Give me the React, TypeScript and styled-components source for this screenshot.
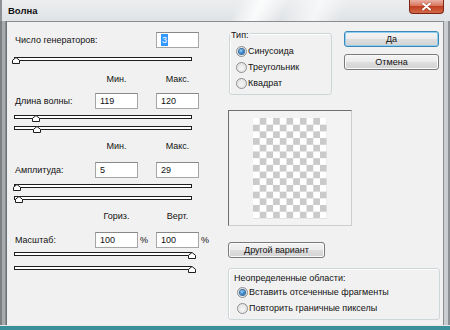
import React from 'react';
import styled, { createGlobalStyle } from 'styled-components';

const GlobalStyle = createGlobalStyle`
  html, body {
    margin: 0;
    padding: 0;
    background: #f1f1f1;
  }
  * { box-sizing: border-box; }
`;

const Window = styled.div`
  width: 450px;
  height: 330px;
  display: flex;
  flex-direction: column;
  overflow: hidden;
  font-family: "Liberation Sans", Arial, sans-serif;
  font-size: 9px;
  color: #111;
`;

const TitleBar = styled.div`
  height: 21px;
  flex: none;
  display: flex;
  justify-content: space-between;
  align-items: flex-start;
  padding: 0 6px 0 8px;
  background:
    linear-gradient(118deg, transparent 52%, rgba(255, 255, 255, 0.85) 57%, transparent 63%, rgba(255, 255, 255, 0.65) 70%, transparent 76%),
    linear-gradient(180deg, #eceef0 0%, #e0e3e6 100%);
  box-shadow: inset 2px 0 #8e9296;
`;

const Title = styled.span`
  margin-top: 5px;
  font-size: 9.5px;
  font-weight: bold;
  color: #111;
`;

const CloseButton = styled.div`
  width: 35px;
  height: 14px;
  display: flex;
  align-items: center;
  justify-content: center;
  border: 1px solid #7d2414;
  border-top: none;
  border-radius: 0 0 4px 4px;
  background: linear-gradient(180deg, #eab0a2 0%, #d8745c 45%, #c2401f 50%, #d2684a 100%);
`;

const Middle = styled.div`
  flex: 1;
  display: flex;
  min-height: 0;
`;

const LeftEdge = styled.div`
  width: 6px;
  flex: none;
  background: linear-gradient(90deg, #7c7f82 0 2px, #a8abae 2px 5px, #8a8d90 5px 6px);
`;

const RightEdge = styled.div`
  width: 6px;
  flex: none;
  background: linear-gradient(90deg, #c9cdd1 0 4px, #8d9195 4px 6px);
`;

const BottomEdge = styled.div`
  height: 5px;
  flex: none;
  background: linear-gradient(180deg, #e6e6e6 0 1px, #3a8f9b 1px 5px);
`;

const Client = styled.div`
  flex: 1;
  display: flex;
  align-items: flex-start;
  padding: 9px 0 0 7px;
  background: #f1f1f1;
  border-top: 1px solid #8a8d90;
  border-left: 1px solid #6c6f72;
  border-right: 1px solid #8a8d90;
`;

/* left pane */

const LeftPane = styled.div`
  width: 200px;
  display: flex;
  flex-direction: column;
`;

const Row = styled.div<{ $top: number; $height?: number }>`
  display: grid;
  grid-template-columns: 81px 43px 18px 43px 12px;
  align-items: center;
  height: ${p => p.$height ?? 16}px;
  margin-top: ${p => p.$top}px;
`;

const Label = styled.span<{ $span?: number }>`
  grid-column: span ${p => p.$span ?? 1};
  padding-left: 1px;
  white-space: nowrap;
`;

const ColHead = styled.span`
  text-align: center;
  white-space: nowrap;
`;

const TextBox = styled.div`
  height: 16px;
  border: 1px solid #a6a6a6;
  border-top-color: #888;
  background: #fff;
  padding-left: 4px;
  line-height: 14px;
  white-space: nowrap;
`;

const Selected = styled.span`
  background: #3399ff;
  color: #fff;
  padding: 1px 1px;
`;

const Percent = styled.span`
  padding-left: 2px;
`;

const SliderBox = styled.div<{ $top: number }>`
  position: relative;
  width: 178px;
  height: 7px;
  margin-top: ${p => p.$top}px;
`;

const Track = styled.div`
  height: 4px;
  border: 1px solid #1e1e1e;
  background: #fff;
`;

const Thumb = styled.svg`
  position: absolute;
  top: 0;
`;

const Slider: React.FC<{ top: number; pos: number }> = ({ top, pos }) => (
  <SliderBox $top={top}>
    <Track />
    <Thumb width="8" height="7" viewBox="0 0 8 7" style={{ left: pos }}>
      <polygon points="4,0.5 7.5,3.3 7.5,6.5 0.5,6.5 0.5,3.3" fill="#fff" stroke="#1e1e1e" strokeWidth="1" />
    </Thumb>
  </SliderBox>
);

/* right pane */

const RightPane = styled.div`
  width: 212px;
  margin-left: 14px;
  display: flex;
  flex-direction: column;
`;

const TopRow = styled.div`
  display: flex;
  align-items: flex-start;
`;

const GroupBox = styled.div<{ $top: number; $width: number; $inset: number; $pad: number }>`
  width: ${p => p.$width}px;
  margin-top: ${p => p.$top}px;
  margin-left: ${p => p.$inset}px;
  display: flex;
  flex-direction: column;
  padding: 0 0 3px ${p => p.$pad}px;
  border: 1px solid #cfd6da;
  border-radius: 3px;
  box-shadow: inset 1px 1px 0 #fff;
`;

const GroupTitle = styled.span<{ $top: number; $left: number; $masked?: boolean }>`
  align-self: flex-start;
  margin: ${p => p.$top}px 0 0 ${p => p.$left}px;
  padding: 0 1px;
  height: 11px;
  line-height: 11px;
  background: ${p => (p.$masked ? '#f1f1f1' : 'transparent')};
  white-space: nowrap;
`;

const RadioRow = styled.div<{ $first?: boolean }>`
  display: flex;
  align-items: center;
  gap: 1px;
  height: 16px;
  margin-top: ${p => (p.$first ? 2 : 0)}px;
  white-space: nowrap;
`;

const RadioDot = styled.span<{ $checked?: boolean }>`
  width: 11px;
  height: 11px;
  flex: none;
  border-radius: 50%;
  border: 1px solid #8c8e91;
  background: radial-gradient(circle at 50% 60%, #f6f6f6 0%, #dcdcdc 100%);
  display: flex;
  align-items: center;
  justify-content: center;

  &::after {
    content: '';
    display: ${p => (p.$checked ? 'block' : 'none')};
    width: 5px;
    height: 5px;
    border-radius: 50%;
    background: radial-gradient(circle at 40% 35%, #9fd6fb 0%, #2a7cc9 55%, #0d4c8c 100%);
    box-shadow: 0 0 0 1px #3b6f9a;
  }
`;

const Radio: React.FC<{ label: string; checked?: boolean; first?: boolean }> = ({ label, checked, first }) => (
  <RadioRow $first={first}>
    <RadioDot $checked={checked} />
    <span>{label}</span>
  </RadioRow>
);

const ButtonColumn = styled.div`
  margin-left: 12px;
  display: flex;
  flex-direction: column;
  gap: 7px;
`;

const Button = styled.div<{ $width: number; $default?: boolean; $top?: number }>`
  width: ${p => p.$width}px;
  height: 16px;
  margin-top: ${p => p.$top ?? 0}px;
  display: flex;
  align-items: center;
  justify-content: center;
  border: 1px solid ${p => (p.$default ? '#3c86b8' : '#7a7a7a')};
  border-radius: 3px;
  background: linear-gradient(180deg, #f4f4f4 0%, #ececec 48%, #dedede 52%, #d2d2d2 100%);
  box-shadow: ${p => (p.$default ? 'inset 0 0 0 1px #8fd0f0' : 'inset 0 0 0 1px #fafafa')};
  white-space: nowrap;
`;

const Preview = styled.div`
  width: 124px;
  height: 116px;
  margin-top: 15px;
  display: flex;
  align-items: center;
  justify-content: center;
  background: #f3f3f3;
  border: 1px solid;
  border-color: #6e6e6e #cdcdcd #cdcdcd #6e6e6e;
`;

const Checker = styled.div`
  width: 74px;
  height: 101px;
  background: repeating-conic-gradient(#cacaca 0 25%, #ffffff 0 50%) 0 0 / 13.4px 13.4px;
`;

const CloseIcon = () => (
  <svg width="11" height="9" viewBox="0 0 11 9">
    <path d="M2 1.5 L9 7.5 M9 1.5 L2 7.5" stroke="#5a1206" strokeWidth="3" strokeLinecap="round" opacity="0.35" />
    <path d="M2 1.5 L9 7.5 M9 1.5 L2 7.5" stroke="#ffffff" strokeWidth="2" strokeLinecap="round" />
  </svg>
);

export default function App() {
  return (
    <>
      <GlobalStyle />
      <Window>
        <TitleBar>
          <Title>Волна</Title>
          <CloseButton>
            <CloseIcon />
          </CloseButton>
        </TitleBar>
        <Middle>
          <LeftEdge />
          <Client>
            <LeftPane>
              <Row $top={1}>
                <Label $span={3}>Число генераторов:</Label>
                <TextBox>
                  <Selected>3</Selected>
                </TextBox>
              </Row>
              <Slider top={9} pos={-2} />

              <Row $top={9} $height={12}>
                <span />
                <ColHead>Мин.</ColHead>
                <span />
                <ColHead>Макс.</ColHead>
              </Row>
              <Row $top={8}>
                <Label>Длина волны:</Label>
                <TextBox>119</TextBox>
                <span />
                <TextBox>120</TextBox>
              </Row>
              <Slider top={6} pos={17.5} />
              <Slider top={4} pos={19} />

              <Row $top={7} $height={12}>
                <span />
                <ColHead>Мин.</ColHead>
                <span />
                <ColHead>Макс.</ColHead>
              </Row>
              <Row $top={10}>
                <Label>Амплитуда:</Label>
                <TextBox>5</TextBox>
                <span />
                <TextBox>29</TextBox>
              </Row>
              <Slider top={6} pos={-1} />
              <Slider top={5} pos={1} />

              <Row $top={7} $height={12}>
                <span />
                <ColHead>Гориз.</ColHead>
                <span />
                <ColHead>Верт.</ColHead>
              </Row>
              <Row $top={10}>
                <Label>Масштаб:</Label>
                <TextBox>100</TextBox>
                <Percent>%</Percent>
                <TextBox>100</TextBox>
                <Percent>%</Percent>
              </Row>
              <Slider top={4} pos={174} />
              <Slider top={7} pos={174} />
            </LeftPane>

            <RightPane>
              <TopRow>
                <GroupBox $top={2} $width={103} $inset={1} $pad={6}>
                  <GroupTitle $top={-4} $left={-6} $masked>Тип:</GroupTitle>
                  <Radio label="Синусоида" checked first />
                  <Radio label="Треугольник" />
                  <Radio label="Квадрат" />
                </GroupBox>
                <ButtonColumn>
                  <Button $width={95} $default>Да</Button>
                  <Button $width={95}>Отмена</Button>
                </ButtonColumn>
              </TopRow>

              <Preview>
                <Checker />
              </Preview>

              <Button $width={97} $top={16}>Другой вариант</Button>

              <GroupBox $top={10} $width={212} $inset={0} $pad={8}>
                <GroupTitle $top={4} $left={-4}>Неопределенные области:</GroupTitle>
                <Radio label="Вставить отсеченные фрагменты" checked />
                <Radio label="Повторить граничные пикселы" />
              </GroupBox>
            </RightPane>
          </Client>
          <RightEdge />
        </Middle>
        <BottomEdge />
      </Window>
    </>
  );
}
